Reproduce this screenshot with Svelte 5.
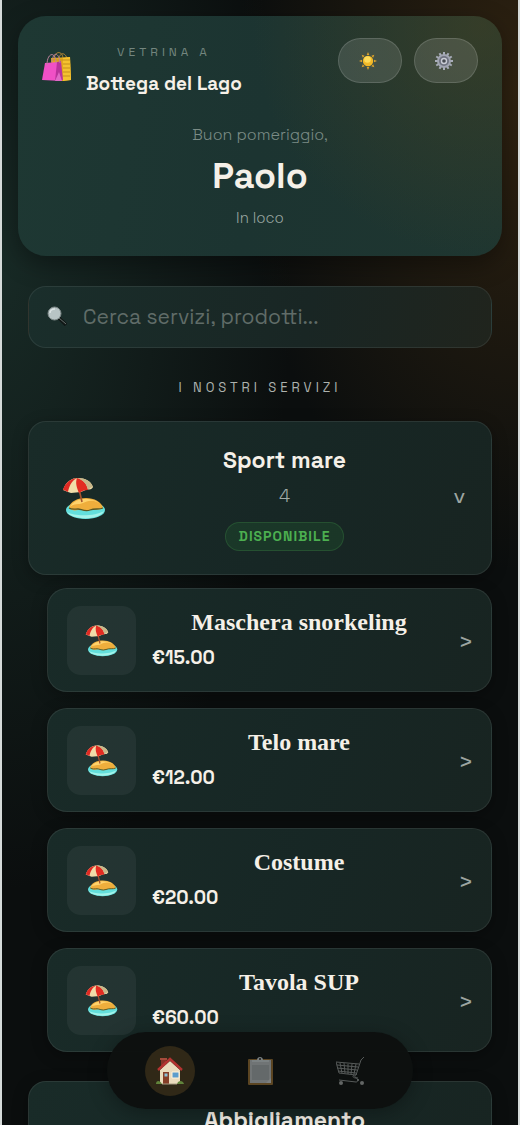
<script>
    let query = $state("");
    let openGroup = $state("Sport mare");
    let activeTab = $state("home");

    const groups = [
        {
            name: "Sport mare",
            items: [
                { name: "Maschera snorkeling", price: 15 },
                { name: "Telo mare", price: 12 },
                { name: "Costume", price: 20 },
                { name: "Tavola SUP", price: 60 },
            ],
        },
        { name: "Abbigliamento", items: [] },
    ];

    const tabs = [
        { id: "home", label: "Home" },
        { id: "orders", label: "Ordini" },
        { id: "cart", label: "Carrello" },
    ];

    function toggle(name) {
        openGroup = openGroup === name ? "" : name;
    }
</script>

{#snippet island()}
    <svg class="island" viewBox="0 0 44 44" aria-hidden="true">
        <ellipse cx="23.500" cy="34" rx="19.500" ry="9" fill="#63dfdc" />
        <path d="M5 36c5 8 32 9 37-1-8 5-29 6-37 1z" fill="#a4f3ea" />
        <path d="M7 32c1-7 9-10 17-10s16 4 17 10c-4 3-8 0-13 2s-8-1-12 0-7 0-9-2z" fill="#efae3c" />
        <path d="M8 31c4-4 9-2 13-4s9-4 16 0c-5-5-24-7-29 4z" fill="#ffd36c" />
        <path d="M7 32c3 2 6 1 9 1s7 3 12 1 9 0 13-2" fill="none" stroke="#5c5a24" stroke-width="1.300" />
        <path d="M17 13l3 13" stroke="#a5532e" stroke-width="1.600" />
        <path d="M1 14C4 5 10 2 16 2c7 0 13 3 15 9-1 2-3 3-5 2l-7 3-10 1-3-1z" fill="#f1dda9" />
        <path d="M1 14C3 7 8 3 15 2 9 5 7 11 6 16c-2-1-3-2-5-2z" fill="#df2a24" />
        <path d="M15 2c-2 5 0 10 2 15 3-2 5-3 9-3-1-6-5-11-11-12z" fill="#e32c22" />
        <path d="M15 2c8 0 14 3 16 9-2 0-3 1-5 3-1-6-5-10-11-12z" fill="#c7b78a" />
    </svg>
{/snippet}

<div class="app">
    <header class="hero">
        <div class="topbar">
            <svg class="bags" viewBox="0 0 30 30" aria-hidden="true">
                <path d="M12 7c1-9 9-8 9 0M17 7c1-8 7-6 8 0" fill="none" stroke="#b98a32" />
                <path d="M9 6l19-1 1 23-9 1-10-3z" fill="#e5a91c" />
                <path d="M21 6l7-1 1 23-8 1z" fill="#f4c22f" />
                <path d="M10 8h18M21 12h7M21 16h7M21 20h7M21 24h7" stroke="#c58f1e" />
                <path d="M3 11l13-1 4 19-20-1z" fill="#f050c6" />
                <path d="M15 10l4-1 2 19-8 1z" fill="#b9329c" />
                <path d="M17 20l3 9h-7z" fill="#df69c7" />
                <path d="M5 13c0-13 9-14 9-2M10 10c1-11 7-10 8 1" fill="none" stroke="#bb819b" />
            </svg>
            <div class="brand">
                <span class="eyebrow">VETRINA A</span>
                <strong>Bottega del Lago</strong>
            </div>
            <div class="actions">
                <button type="button" aria-label="Cambia tema">
                    <svg viewBox="0 0 18 18" aria-hidden="true">
                        {#each [0, 45, 90, 135, 180, 225, 270, 315] as angle}
                            <path d="M9 0l1.300 3H7.700z" fill="#dba12b" transform="rotate({angle} 9 9)" />
                        {/each}
                        <circle cx="9" cy="9" r="5.200" fill="#f2b928" />
                        <circle cx="8.500" cy="7.500" r="3.300" fill="#ffdc58" />
                    </svg>
                </button>
                <button type="button" aria-label="Impostazioni">
                    <svg viewBox="0 0 18 18" aria-hidden="true">
                        {#each [0, 30, 60, 90, 120, 150] as angle}
                            <path d="M9 0v18" stroke="#a9adba" stroke-width="2" transform="rotate({angle} 9 9)" />
                        {/each}
                        <circle cx="9" cy="9" r="7" fill="#a1a5b1" />
                        <circle cx="9" cy="9" r="5" fill="#6f7380" />
                        <circle cx="9" cy="9" r="2.500" fill="#474b52" stroke="#c9ccd5" stroke-width="1.400" />
                    </svg>
                </button>
            </div>
        </div>
        <p class="greeting">Buon pomeriggio,</p>
        <h1>Paolo</h1>
        <p class="place">In loco</p>
    </header>

    <main>
        <label class="search">
            <svg viewBox="0 0 20 20" aria-hidden="true">
                <path d="M12 12l7 7" stroke="#111716" stroke-width="3.400" />
                <path d="M12 12l7 6" stroke="#66706d" stroke-width="1" />
                <circle cx="7.500" cy="7.500" r="6.500" fill="#b8c4c5" stroke="#7e8989" />
                <path d="M3 7c0-3 3-4 5-4" fill="none" stroke="#dce4e4" stroke-width="1.500" />
            </svg>
            <input type="text" placeholder="Cerca servizi, prodotti..." aria-label="Cerca servizi" bind:value={query} />
        </label>

        <h2>I NOSTRI SERVIZI</h2>

        {#each groups as group}
            <section class="group">
                <button type="button" class="card category" aria-expanded={openGroup === group.name} onclick={() => toggle(group.name)}>
                    {@render island()}
                    <span class="info">
                        <span class="title">{group.name}</span>
                        <span class="count">{group.items.length}</span>
                        <span class="badge">DISPONIBILE</span>
                    </span>
                    <span class="arrow" class:open={openGroup === group.name}>&gt;</span>
                </button>

                {#if openGroup === group.name}
                    <div class="items">
                        {#each group.items as item}
                            <button type="button" class="card item">
                                <span class="thumb">{@render island()}</span>
                                <span class="details">
                                    <span class="name">{item.name}</span>
                                    <span class="price">€{item.price.toFixed(2)}</span>
                                </span>
                                <span class="arrow">&gt;</span>
                            </button>
                        {/each}
                    </div>
                {/if}
            </section>
        {/each}
    </main>

    <nav>
        {#each tabs as tab}
            <button type="button" class:active={activeTab === tab.id} aria-label={tab.label} onclick={() => (activeTab = tab.id)}>
                {#if tab.id === "home"}
                    <svg viewBox="0 0 28 28" aria-hidden="true">
                        <path d="M5 1h5v10H5z" fill="#873228" />
                        <path d="M4 1h7v2H4z" fill="#a54c3c" />
                        <path d="M4 13l10-9 10 9v14H4z" fill="#eadbbd" />
                        <path d="M2 13L14 2l12 11" fill="none" stroke="#b43331" stroke-width="2.400" />
                        <path d="M7 15h6v12H7z" fill="#853e28" />
                        <path d="M8.500 16.500h3v3h-3z" fill="#8bc0d8" />
                        <path d="M16 15h7v6h-7z" fill="#5c9dcc" stroke="#fff3da" />
                        <path d="M0 27c0-4 4-4 6 0zM21 27c1-4 6-4 7 0z" fill="#61843b" />
                        <path d="M6 27h15" stroke="#a69a81" />
                    </svg>
                {:else if tab.id === "orders"}
                    <svg viewBox="0 0 28 28" aria-hidden="true">
                        <rect x="2" y="2" width="25" height="26" rx="1" fill="#5b4522" />
                        <rect x="4" y="3" width="21" height="23" fill="#707475" />
                        <path d="M6 8h17v15H6z" fill="#64696a" />
                        <path d="M20 26l5-5v5z" fill="#7c7f7f" />
                        <path d="M6 3h5c0-4 6-4 6 0h6v2H6z" fill="#7b8182" />
                        <circle cx="14" cy="2" r="1" fill="#171b1a" />
                    </svg>
                {:else}
                    <svg viewBox="0 0 28 28" aria-hidden="true">
                        <g fill="none" stroke="#565a59" stroke-width="1">
                            <path d="M28 0l-3 3-5 15-17-2L0 5l23 2" />
                            <path d="M1 8l21 2M1 11l20 2M2 14l18 2M4 6l2 10M8 6l1 10M12 7l0 10M16 7l-1 10M20 7l-2 10" />
                            <path d="M18 18c-2 1-1 3 2 3 3 1 2 4 0 4L3 23M21 17c-4 2-2 4 1 4" />
                        </g>
                        <circle cx="5" cy="26" r="2" fill="#626665" />
                        <circle cx="26" cy="26" r="2" fill="#626665" />
                        <circle cx="22" cy="23" r="1" fill="#626665" />
                    </svg>
                {/if}
            </button>
        {/each}
    </nav>
</div>

<style>
    :global(body) {
        background: #0b0e0d;
    }

    .app {
        position: relative;
        box-sizing: border-box;
        height: 100vh;
        overflow: hidden;
        padding: 16px 16px 0;
        border: solid #d5dad9;
        border-width: 0 2px;
        color: #f5f0e8;
        font-family: "Space Grotesk", Inter, "Liberation Sans", sans-serif;
        text-align: center;
        background:
            radial-gradient(ellipse 280px 480px at 100% 8%, rgba(70, 47, 18, 0.6), transparent),
            radial-gradient(ellipse 290px 620px at 0% 24%, rgba(32, 60, 53, 0.6), transparent),
            #0b0e0e;
    }

    button {
        font: inherit;
        color: inherit;
        cursor: pointer;
    }

    h1,
    h2,
    p {
        margin: 0;
    }

    svg {
        display: block;
        flex: none;
    }

    .hero {
        box-sizing: border-box;
        height: 240px;
        padding: 22px 24px 0;
        border-radius: 28px;
        background:
            radial-gradient(circle at 96% 4%, rgba(72, 67, 34, 0.55), transparent 230px),
            linear-gradient(100deg, #1e3833, #1c3431 50%, #1f3630);
        box-shadow: 0 8px 24px rgba(0, 0, 0, 0.35);
    }

    .topbar {
        display: flex;
        align-items: flex-start;
        height: 80px;
    }

    .bags {
        width: 30px;
        height: 30px;
        margin: 14px 14px 0 0;
    }

    .brand {
        display: flex;
        flex-direction: column;
        gap: 10px;
        padding-top: 6px;
    }

    .eyebrow {
        font-size: 12px;
        line-height: 16px;
        letter-spacing: 4px;
        color: #74867f;
    }

    .brand strong {
        font-size: 19px;
        font-weight: 600;
        line-height: 28px;
    }

    .actions {
        display: flex;
        gap: 12px;
        margin-left: auto;
    }

    .actions button {
        width: 64px;
        height: 45px;
        padding: 0 0 0 20px;
        border: 1px solid rgba(255, 255, 255, 0.14);
        border-radius: 23px;
        background: rgba(255, 255, 255, 0.12);
    }

    .actions svg {
        width: 18px;
        height: 18px;
    }

    .greeting {
        margin-top: 6px;
        font-size: 16px;
        font-weight: 300;
        line-height: 22px;
        color: #7b8c86;
    }

    h1 {
        margin-top: 8px;
        font-size: 36px;
        font-weight: 600;
        line-height: 44px;
    }

    .place {
        margin-top: 10px;
        font-size: 15px;
        font-weight: 300;
        line-height: 20px;
        color: #9aa7a1;
    }

    main {
        padding: 30px 10px 0;
    }

    .search {
        display: flex;
        align-items: center;
        gap: 16px;
        box-sizing: border-box;
        height: 62px;
        padding: 0 18px 2px;
        border: 1px solid rgba(255, 255, 255, 0.08);
        border-radius: 18px;
        background: linear-gradient(100deg, #1a2e2b, #192624 60%, #20241d);
    }

    .search svg {
        width: 20px;
        height: 20px;
    }

    .search input {
        flex: 1;
        min-width: 0;
        padding: 0;
        border: 0;
        outline: 0;
        background: none;
        color: inherit;
        font: inherit;
        font-size: 21px;
    }

    .search input::placeholder {
        color: #606c68;
        opacity: 1;
    }

    h2 {
        margin: 31px 0 24px;
        font-size: 13px;
        font-weight: 400;
        line-height: 18px;
        letter-spacing: 4px;
        color: #adb2ae;
    }

    .group {
        margin-bottom: 29px;
    }

    .card {
        display: flex;
        align-items: center;
        box-sizing: border-box;
        width: 100%;
        border: 1px solid rgba(255, 255, 255, 0.08);
        background: linear-gradient(110deg, #192b28, #172725 55%, #182421);
        box-shadow: 0 4px 16px rgba(0, 0, 0, 0.3);
    }

    .category {
        height: 154px;
        padding: 0 24px 0 33px;
        border-radius: 18px;
    }

    .category .island {
        width: 44px;
        height: 44px;
    }

    .info {
        display: flex;
        flex: 1;
        flex-direction: column;
        align-items: center;
        gap: 11px;
        padding-left: 12px;
    }

    .title {
        font-size: 23px;
        font-weight: 600;
        line-height: 28px;
    }

    .count {
        font-size: 18px;
        font-weight: 300;
        line-height: 22px;
        color: #a0aaa6;
    }

    .badge {
        margin-top: 4px;
        padding: 0 13px;
        border: 1px solid rgba(76, 175, 80, 0.22);
        border-radius: 15px;
        background: rgba(40, 120, 55, 0.2);
        color: #4caf50;
        font-size: 14px;
        font-weight: 600;
        line-height: 27px;
        letter-spacing: 1px;
    }

    .arrow {
        width: 16px;
        padding-top: 3px;
        color: #9da5a1;
        font-size: 24px;
        line-height: 24px;
    }

    .arrow.open {
        padding: 0;
        transform: rotate(90deg);
    }

    .items {
        display: flex;
        flex-direction: column;
        gap: 16px;
        padding: 13px 0 0 19px;
    }

    .item {
        height: 104px;
        padding: 0 17px 0 19px;
        border-radius: 20px;
    }

    .thumb {
        display: grid;
        place-items: center;
        width: 69px;
        height: 69px;
        border-radius: 14px;
        background: rgba(255, 255, 255, 0.05);
    }

    .thumb .island {
        width: 33px;
        height: 33px;
    }

    .details {
        display: flex;
        flex: 1;
        flex-direction: column;
        gap: 6px;
        padding: 0 12px 0 16px;
    }

    .name {
        font-family: "Liberation Serif", serif;
        font-size: 24px;
        font-weight: 700;
        line-height: 30px;
    }

    .price {
        font-size: 19px;
        font-weight: 600;
        line-height: 30px;
        text-align: left;
    }

    nav {
        position: absolute;
        bottom: 16px;
        left: 50%;
        display: flex;
        align-items: center;
        gap: 40px;
        box-sizing: border-box;
        height: 77px;
        padding: 0 38px;
        border-radius: 39px;
        background: rgba(13, 16, 15, 0.98);
        box-shadow: 0 4px 20px rgba(0, 0, 0, 0.3);
        transform: translateX(-50%);
    }

    nav button {
        display: grid;
        place-items: center;
        width: 50px;
        height: 50px;
        padding: 0;
        border: 0;
        border-radius: 50%;
        background: none;
    }

    nav button.active {
        background: #302817;
    }

    nav svg {
        width: 28px;
        height: 28px;
    }
</style>
